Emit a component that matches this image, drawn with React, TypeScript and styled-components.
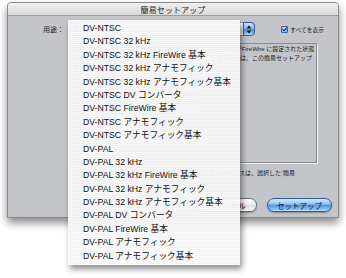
import React from "react";
import styled, { createGlobalStyle } from "styled-components";

const GlobalStyle = createGlobalStyle`
  html, body { margin: 0; padding: 0; background: #ffffff; }
  * { box-sizing: border-box; }
`;

const JP = `"Liberation Sans", "Noto Sans CJK JP", sans-serif`;

const Page = styled.div`
  position: relative;
  width: 346px;
  height: 278px;
  overflow: hidden;
  background: #ffffff;
  padding: 2px 0 0 7px;
  font-family: ${JP};
`;

const Window = styled.div`
  width: 332px;
  height: 216px;
  display: flex;
  flex-direction: column;
  background: #c4c5c9;
  border: 1px solid #8a8a8d;
  border-radius: 4px 4px 0 0;
  box-shadow: 0 5px 9px rgba(0, 0, 0, 0.45);
`;

const TitleBar = styled.div`
  height: 13px;
  flex: none;
  display: flex;
  align-items: center;
  justify-content: center;
  background: linear-gradient(to bottom, #efefef, #dadada);
  border-bottom: 1px solid #9c9c9f;
  border-radius: 3px 3px 0 0;
  font-size: 8px;
  color: #1e1e1e;
  letter-spacing: 0.1px;
`;

const Content = styled.div`
  flex: 1;
  display: flex;
  flex-direction: column;
  padding: 6px 6px 5px 0;
`;

const TopRow = styled.div`
  display: flex;
  align-items: center;
  height: 14px;
  padding-left: 35px;
`;

const FieldLabel = styled.span`
  font-size: 7px;
  color: #222;
  margin-right: 4px;
`;

const PopupButton = styled.div`
  width: 187px;
  height: 14px;
  display: flex;
  align-items: center;
  justify-content: space-between;
  background: linear-gradient(to bottom, #ffffff, #ececec 50%, #e0e0e0 51%, #f7f7f7);
  border: 1px solid #8a8a8a;
  border-radius: 4px;
  padding-left: 4px;
  font-size: 8.6px;
  color: #222;
`;

const Stepper = styled.div`
  width: 12px;
  height: 14px;
  margin: -1px -1px -1px 0;
  display: flex;
  align-items: center;
  justify-content: center;
  border: 1px solid #2f5fa8;
  border-radius: 0 4px 4px 0;
  background: linear-gradient(to bottom, #cfe5fc 0%, #8dbff4 45%, #4f94e4 52%, #76b5f3 80%, #b8ddfb 100%);
`;

const CheckGroup = styled.label`
  display: flex;
  align-items: center;
  gap: 2px;
  margin-left: 26px;
  font-size: 5.8px;
  color: #222;
`;

const CheckBox = styled.span`
  width: 7px;
  height: 7px;
  display: flex;
  align-items: center;
  justify-content: center;
  border: 1px solid #2f5fa8;
  border-radius: 1px;
  background: linear-gradient(to bottom, #cfe5fc, #5b9ce6 55%, #9ccbf7);
`;

const DescBox = styled.div`
  width: 247px;
  height: 120px;
  margin: 7px 0 0 62px;
  border: 1px solid #8b8c90;
  box-shadow: 1px 1px 0 #eeeff1;
  padding: 1px 0 0 3px;
  overflow: hidden;
`;

const DescLine = styled.div`
  height: 9px;
  line-height: 9px;
  font-size: 6px;
  color: #222;
  white-space: nowrap;
`;

const Note = styled.div`
  margin: 6px 0 0 64px;
  height: 8px;
  line-height: 8px;
  font-size: 6px;
  color: #222;
  white-space: nowrap;
`;

const ButtonRow = styled.div`
  margin-top: auto;
  display: flex;
  justify-content: flex-end;
  gap: 10px;
`;

const PillButton = styled.div<{ $primary?: boolean; $w: number }>`
  width: ${(p) => p.$w}px;
  height: 14px;
  display: flex;
  align-items: center;
  justify-content: center;
  border-radius: 7px;
  font-size: 7.5px;
  color: #111;
  border: 1px solid ${(p) => (p.$primary ? "#2c5ba6" : "#707070")};
  background: ${(p) =>
    p.$primary
      ? "linear-gradient(to bottom, #d6e9fd 0%, #93c3f5 42%, #5196e5 52%, #78b7f4 80%, #bfe1fc 100%)"
      : "linear-gradient(to bottom, #ffffff 0%, #f1f1f1 45%, #dedede 52%, #eeeeee 80%, #ffffff 100%)"};
  box-shadow: 0 1px 1.5px rgba(0, 0, 0, 0.3);
`;

const Menu = styled.div`
  position: absolute;
  left: 68px;
  top: 20px;
  width: 172px;
  height: 245px;
  padding-top: 2px;
  background: repeating-linear-gradient(
    to bottom,
    rgba(250, 250, 250, 0.95) 0px,
    rgba(250, 250, 250, 0.95) 1px,
    rgba(242, 242, 242, 0.95) 1px,
    rgba(242, 242, 242, 0.95) 2px
  );
  box-shadow: 2px 4px 6px rgba(0, 0, 0, 0.45);
`;

const MenuItem = styled.div`
  height: 13.4px;
  line-height: 13.4px;
  padding-left: 15px;
  font-size: 8.7px;
  color: #111;
  white-space: nowrap;
`;

const items = [
  "DV-NTSC",
  "DV-NTSC 32 kHz",
  "DV-NTSC 32 kHz FireWire 基本",
  "DV-NTSC 32 kHz アナモフィック",
  "DV-NTSC 32 kHz アナモフィック基本",
  "DV-NTSC DV コンバータ",
  "DV-NTSC FireWire 基本",
  "DV-NTSC アナモフィック",
  "DV-NTSC アナモフィック基本",
  "DV-PAL",
  "DV-PAL 32 kHz",
  "DV-PAL 32 kHz FireWire 基本",
  "DV-PAL 32 kHz アナモフィック",
  "DV-PAL 32 kHz アナモフィック基本",
  "DV-PAL DV コンバータ",
  "DV-PAL FireWire 基本",
  "DV-PAL アナモフィック",
  "DV-PAL アナモフィック基本",
];

const descLines = [
  "このプリセットは、カメラやデッキのデバイスコントロールがFireWire に設定された状態",
  "DV-NTSC 形式のビデオを取り込んだり書き出したりする場合は、この簡易セットアップ",
  "を使用してください。",
  "",
  "",
  "・オーディオ出力のサンプルレート：48 kHz",
  "・キャプチャプリセット：DV FireWire NTSC",
  "・シーケンス：DV-NTSC (720 x 480)",
];

const StepperIcon = () => (
  <svg width="6" height="9" viewBox="0 0 6 9">
    <path d="M3 0.5 L5.5 3.5 L0.5 3.5 Z" fill="#111" />
    <path d="M3 8.5 L5.5 5.5 L0.5 5.5 Z" fill="#111" />
  </svg>
);

const CheckIcon = () => (
  <svg width="7" height="7" viewBox="0 0 7 7">
    <path d="M1 3.5 L2.8 5.5 L6.5 0.5" stroke="#111" strokeWidth="1.3" fill="none" />
  </svg>
);

export default function App() {
  return (
    <>
      <GlobalStyle />
      <Page>
        <Window>
          <TitleBar>簡易セットアップ</TitleBar>
          <Content>
            <TopRow>
              <FieldLabel>用途：</FieldLabel>
              <PopupButton>
                <span>DV-NTSC</span>
                <Stepper>
                  <StepperIcon />
                </Stepper>
              </PopupButton>
              <CheckGroup>
                <CheckBox>
                  <CheckIcon />
                </CheckBox>
                すべてを表示
              </CheckGroup>
            </TopRow>
            <DescBox>
              {descLines.map((l, i) => (
                <DescLine key={i}>{l || "\u00a0"}</DescLine>
              ))}
            </DescBox>
            <Note>このプロジェクトで新たに作成される新規のすべてのシーケンスは、選択した“簡易</Note>
            <ButtonRow>
              <PillButton $w={60}>キャンセル</PillButton>
              <PillButton $w={65} $primary>
                セットアップ
              </PillButton>
            </ButtonRow>
          </Content>
        </Window>
        <Menu>
          {items.map((it) => (
            <MenuItem key={it}>{it}</MenuItem>
          ))}
        </Menu>
      </Page>
    </>
  );
}
